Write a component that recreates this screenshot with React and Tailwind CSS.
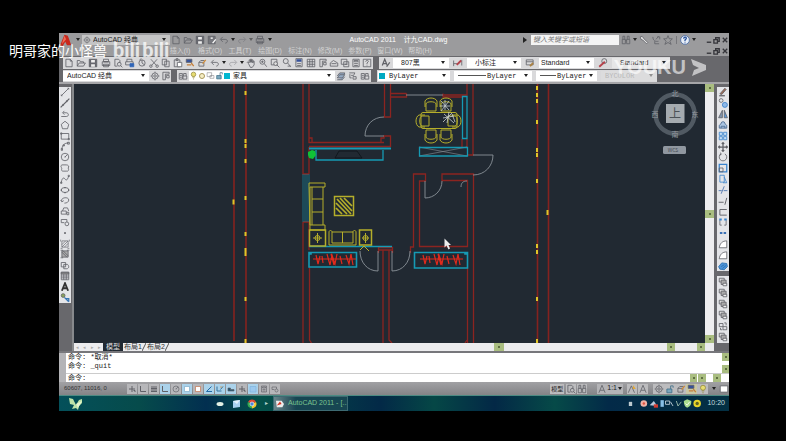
import React, { useState } from 'react';

const glyphs = {
    file: <path d="M3 2h7l3 3v9H3zM10 2v3h3" />,
    open: <path d="M2 13V4h4l1 2h5v2M2 13l3-5h10l-3 5z" />,
    save: <g><path d="M2 2h12v12H2z" fill="#66676e" /><path d="M5 3h6v4H5zM5 10h6v4H5z" fill="#eee" stroke="none" /></g>,
    saveAs: <g><path d="M2 2h11v12H2z" fill="#77787e" /><path d="M5 3h5v4H5z" fill="#eee" /><path d="M9 13l5-6" stroke="#fff" strokeWidth="2" /></g>,
    print: <g><path d="M4 6V2h8v4M2 6h12v6H2zM4 10h8v4H4z" /><path d="M4 6h8" strokeWidth="2" /></g>,
    preview: <g><path d="M3 2h6l2 2v4M3 2v11h4" /><circle cx="10" cy="10" r="3" /><path d="M12 12l3 3" /></g>,
    publish: <g><path d="M3 6V2h8v4M1 6h12v5H1z" /><path d="M8 9h6v5H8z" fill="#2f65b8" stroke="#2f65b8" /></g>,
    globe: <g><circle cx="8" cy="8" r="5" /><path d="M8 3v5l4 3M4 3l3-2" /></g>,
    cut: <g><path d="M3 2l9 10M13 2L4 12" /><circle cx="3" cy="13" r="2" /><circle cx="13" cy="13" r="2" /></g>,
    copy: <path d="M2 2h7v9H2zM6 5h7v9H6z" />,
    paste: <g><path d="M2 3h9v11H2zM5 1h3v3H5z" /><path d="M7 7h7v7H7z" fill="#fff" /></g>,
    match: <g><path d="M2 2h9v5H2z" fill="#35519b" /><path d="M3 11h7M10 8l4 5" stroke="#c5803b" strokeWidth="2" /></g>,
    block: <g><path d="M3 7h8v6H3zM3 7l3-3h6" /><path d="M9 9l5-6" stroke="#d18b37" strokeWidth="2" /></g>,
    undo: <path d="M3 7h7c5 0 4 6 0 6M6 3L2 7l4 4" />,
    redo: <path d="M13 7H6c-5 0-4 6 0 6M10 3l4 4-4 4" opacity=".45" />,
    hand: <path d="M4 9L2 7l1-1 2 2V3h2v4V2h2v5V3h2v5V5h2v6l-3 4H7z" />,
    zoom: <g><circle cx="7" cy="6" r="4" /><path d="M10 9l4 5M7 4v4M5 6h4" /></g>,
    zoomWin: <g><path d="M2 2h9v9H2z" /><circle cx="9" cy="9" r="3" fill="#ddd" /><path d="M11 11l4 4" /></g>,
    zoomPrev: <g><circle cx="6" cy="5" r="4" /><path d="M9 8l5 6M9 13h5" /></g>,
    props: <g><path d="M3 1h10v13H3z" /><path d="M4 2h8v4H4z" fill="#35519b" stroke="none" /><path d="M5 9h6M5 12h6" /></g>,
    grid: <path d="M2 2h12v12H2zM2 6h12M2 10h12M6 2v12M10 2v12" />,
    palette: <path d="M3 2h10v3H7v9H3zM9 7h4v4H9z" />,
    sheet: <path d="M2 8l5-4 7 4v5H2zM4 9h8" />,
    markup: <path d="M2 2h9v8H2zM6 6h8v8H6zM8 10h4" />,
    calc: <path d="M3 2h10v12H3zM5 4h6v2H5zM5 9h6M5 12h6" />,
    help: <g><path d="M2 2h12v12H2z" /><path d="M6 6c0-3 5-3 4 0L8 8v2M8 12v1" /></g>,
    textStyle: <g><path d="M2 12L6 2l4 10M3 9h6" strokeWidth="2" /><path d="M9 14l5-7" strokeWidth="2" /></g>,
    dimStyle: <g><path d="M1 4v9M1 9h9M14 3v9" /><path d="M6 11l7-7" stroke="#b5424b" strokeWidth="3" /></g>,
    tableStyle: <g><path d="M2 3h11v8H2zM2 6h11" /><path d="M8 13l5-5" stroke="#aa8142" strokeWidth="3" /></g>,
    leader: <g><circle cx="10" cy="5" r="4" /><path d="M2 14l9-8" stroke="#b5424b" strokeWidth="3" /></g>,
    gear: <g><circle cx="8" cy="8" r="5" /><circle cx="8" cy="8" r="2" /><path d="M8 1v2M8 13v2M1 8h2M13 8h2" /></g>,
    layers: <path d="M2 11l4-5h8l-4 5zM2 8l4-5h8l-1 3M2 14h8l4-5" fill="#96abc6" />,
    layerPrev: <path d="M2 3h9l-2 4H5M8 9h5v4H8zM3 5v6h3" />,
    layerBox: <path d="M2 4h5v9H2zM8 8h6v5H8zM9 8V4h4v4M3 7h3M3 10h3" />,
    bulb: <g stroke="#94893e"><circle cx="8" cy="6" r="4" fill="#e6dc72" /><path d="M6 11h4M7 14h2" /></g>,
    sun: <circle cx="8" cy="8" r="5" stroke="#a8975a" fill="#f5eec6" strokeWidth="2" />,
    freeze: <path d="M2 3h8v7H2zM7 8h7v5H7z" opacity=".6" />,
    lock: <g stroke="#3f6d88"><path d="M3 8h8v6H3z" fill="#7aa6bc" /><path d="M9 8V3h4v3" /></g>,
    binoc: <path d="M2 7h5v7H2zM9 7h5v7H9zM3 7V2h3v5M10 7V2h3v5M7 9h2" />,
    key: <path d="M2 3l3-1 3 4 6 6-2 2-6-6-3-1z" fill="#e0e0e0" />,
    dish: <path d="M3 3c0 6 4 8 9 7M12 2l-4 5M6 10v4h7M10 3h4v4" />,
    star: <path d="M8 1l2 5h5l-4 4 2 5-5-3-5 3 2-5-4-4h5z" />,
    about: <g><circle cx="8" cy="8" r="7" fill="#e8eef6" stroke="#4b6ea9" /><path d="M6 6c0-4 5-3 4 0L8 8v2M8 12v1" stroke="#234f9b" strokeWidth="2" /></g>,
    line: <path d="M2 14L14 2M2 12v2h2M12 2h2v2" />,
    xline: <path d="M1 15L15 1M4 10l2 2M10 4l2 2" strokeWidth="2" />,
    pline: <path d="M2 12h8c5 0 4-6 0-6H5M7 3L4 6l3 3" />,
    polygon: <path d="M8 2l6 5-2 7H4L2 7z" />,
    rect: <path d="M2 4h12v9H2zM1 3h2v2H1zM13 12h2v2h-2z" />,
    arc: <path d="M3 14C3 7 7 3 14 3M2 12h2v3H2zM12 2h3v3h-3zM5 6h2v2H5z" />,
    circle: <g><circle cx="8" cy="8" r="6" /><path d="M8 8l4-4M7 8h2" /></g>,
    cloud: <path d="M3 3h7c4 0 5 3 3 5 2 3 0 6-3 5H5c-4 0-2-4-2-5-2-1-2-4 0-5z" />,
    spline: <path d="M2 14c1-8 4-9 6-6s4 2 6-5M1 13h2v2H1zM13 2h2v2h-2z" />,
    ellipse: <g><ellipse cx="8" cy="8" rx="6" ry="4" /><path d="M1 8h2M13 8h2M8 3v2M8 11v2" strokeWidth="2" /></g>,
    ellArc: <path d="M3 10C0 4 14 2 14 8c0 3-3 5-7 5M1 8l2 3 3-2" />,
    insert: <path d="M2 8h8v5H2zM4 8l2-5h6l2 5M11 10h3v4h-3z" />,
    makeBlock: <g><path d="M2 9V4h9v4M2 9h5" /><circle cx="11" cy="11" r="3" /></g>,
    point: <circle cx="8" cy="8" r="1" fill="#555" />,
    hatch: <path d="M3 3h10v10H3zM3 9l6-6M3 13L13 3M7 13l6-6M1 1v3M15 1v3M1 15h3M12 15h3" opacity=".8" />,
    gradient: <g><path d="M3 3h10v10H3z" fill="#aaa" /><path d="M3 5l8 8M5 3l8 8M1 2h4M11 2h4M1 14h4" /></g>,
    region: <path d="M2 4h7v7H2zM6 7h6c4 4 1 7-1 7H6z" />,
    table: <g><path d="M2 2h12v12H2zM2 8h12M2 11h12M6 5v9M10 5v9" /><path d="M2 2h12v3H2z" fill="#888" /></g>,
    letterA: <path d="M3 14L8 2l5 12M5 10h6" strokeWidth="3" stroke="#333" />,
    addSel: <g><circle cx="5" cy="4" r="3" fill="#8aa45c" /><path d="M9 9h5v5M7 7l7 7" stroke="#3575b5" strokeWidth="2" /></g>,
    erase: <g><path d="M3 11l8-9 2 2-7 8z" fill="#9c6a54" /><path d="M2 14h9" strokeWidth="2" /></g>,
    copyObj: <g><circle cx="5" cy="4" r="3" /><circle cx="11" cy="11" r="4" fill="#8fb9e8" stroke="#397fc9" /></g>,
    mirror: <g><path d="M7 2v12H1z" fill="#8296ae" /><path d="M10 2v12h5z" fill="#5b9ce0" /></g>,
    offset: <path d="M2 13V9c1-3 3-1 3-4s6-3 6 0 3 2 3 4v4zM5 13v-3h6v3" fill="#aac5e2" stroke="#45658c" />,
    array: <path d="M2 2h5v5H2zM9 2h5v5H9zM2 9h5v5H2zM9 9h5v5H9z" stroke="#3a84cd" fill="#c5def5" />,
    move: <path d="M8 1v14M1 8h14M6 3l2-2 2 2M6 13l2 2 2-2M3 6L1 8l2 2M13 6l2 2-2 2" strokeWidth="2" />,
    rotate: <path d="M5 3a6 6 0 1 0 6 0M4 1l1 3-3 1" />,
    scale: <g><path d="M2 2h12v12H2z" stroke="#3a84cd" strokeWidth="2" /><path d="M2 8h6v6H2z" /></g>,
    stretch: <path d="M3 2h7v11H3zM10 5l4 9H8" stroke="#3a84cd" />,
    trim: <path d="M1 9h5M9 9h6M5 14l5-12" stroke="#416baa" />,
    extend: <path d="M1 10h8M14 3l-3 11" strokeWidth="1.5" />,
    brk: <path d="M14 4H3v9h11" strokeWidth="1.5" />,
    brk2: <g><path d="M3 5v8h3M13 5v8h-3" /><path d="M2 4h4M10 4h4" stroke="#3a84cd" strokeWidth="3" /></g>,
    join: <path d="M3 8h4M9 8h4" stroke="#3a70b5" strokeWidth="3" />,
    chamfer: <path d="M2 14h12V3C7 3 3 7 2 14z" fill="#fff" />,
    explode: <path d="M1 9l5-6 8 1 1 5-5 5-7-1zM5 9l5-3M7 12l6-5" fill="#4d93d8" stroke="#286eae" />,
    order: <g><path d="M2 2h8v6H2z" fill="#ddd" /><path d="M5 5h8v7H5z" fill="#aaa" /><path d="M8 10h6v4H8z" fill="#eee" /></g>,
    order2: <path d="M2 4h6v5H2zM8 9h6v5H8zM10 3h3v4M4 11v3h3" />,
    snap: <path d="M8 2v12M2 8h12M11 11h3v3" strokeWidth="2" />,
    ortho: <path d="M3 2v11h11" strokeWidth="2" />,
    dyn: <g><path d="M2 3v9h9M9 9l5-6" strokeWidth="2" stroke="#34739e" /><path d="M8 4h5" stroke="#d18c34" /></g>,
    polar: <path d="M13 3L3 13h11" stroke="#236aa5" strokeWidth="2" />,
    lwt: <path d="M2 6h5v3h7v3H2z" fill="#245772" />,
    shade: <path d="M2 4h12M2 7h12M2 10h12M2 13h12" strokeWidth="2" />,
    plain: <path d="M3 3h10v10H3z" fill="#fff" stroke="#79a9c8" />,
    orange: <path d="M3 3h10v10H3z" fill="#fff" stroke="#c36d46" />,
    blank: <path d="M2 3h12v11H2z" fill="#9cc9ee" stroke="#7cb3df" />,
    annot: <path d="M3 14L8 2l5 12M5 10h6" />,
    annotGold: <g><path d="M2 14L7 3l5 11" /><path d="M10 2l4 6H9z" fill="#e1a83a" stroke="none" /></g>,
    win: <path d="M2 3h12v10H2z" fill="#fff" />,
};

function Glyph({ name, className = 'size-[10px]' }) {
    return (
        <svg viewBox="0 0 16 16" className={`shrink-0 ${className}`} fill="none" stroke="#606167" strokeWidth="1.3">
            {glyphs[name]}
        </svg>
    );
}

function Tool({ name, className = 'w-3' }) {
    return (
        <button aria-label={name} className={`flex min-h-0 shrink-0 items-center justify-center ${className}`}>
            <Glyph name={name} />
        </button>
    );
}

function Caret({ className = 'w-[6px]' }) {
    return (
        <svg viewBox="0 0 6 4" className={`h-1 shrink-0 ${className}`}>
            <path d="M1 0h4L3 3z" fill="#222" />
        </svg>
    );
}

function Combo({ label, options, className, bg = 'bg-white', selectClass = 'pl-2', children, disabled }) {
    return (
        <div className={`flex h-[10px] shrink-0 items-center ${bg} ${className}`}>
            {children}
            <select aria-label={label} disabled={disabled}
                className={`h-full min-w-0 flex-1 appearance-none bg-transparent text-[7px] leading-[10px] text-[#222] outline-none ${selectClass}`}>
                {options.map(o => <option key={o}>{o}</option>)}
            </select>
            <Caret className={disabled ? 'mr-[3px] w-[6px] opacity-40' : 'mr-[3px] w-[6px]'} />
        </div>
    );
}

const Rule = ({ className }) => <span className={`ml-1 h-px shrink-0 bg-[#555] ${className}`} />;

const Divider = () => <span className="h-full w-[6px] shrink-0 bg-[#68686c]" />;

function WindowButtons() {
    return (
        <div className="flex text-[#35353a]">
            {['M2 7h5', 'M1 4h4v4H1zM3 4V2h4v4H5', 'M2 2l5 5M7 2L2 7'].map((d, i) => (
                <button key={d} aria-label={['Minimize', 'Restore', 'Close'][i]} className="w-2">
                    <svg viewBox="0 0 9 9" className="size-2" fill="none" stroke="currentColor" strokeWidth="1.5"><path d={d} /></svg>
                </button>
            ))}
        </div>
    );
}

function TitleBar() {
    return (
        <div className="flex h-[13px] items-center pt-px">
            <button aria-label="Application menu" className="flex w-[23px] items-center">
                <svg viewBox="0 0 18 14" className="h-3 w-4">
                    <path d="M1 13L6 1l4 1 4 11H9l-2-4-3 5z" fill="#c8281c" />
                    <path d="M6 2l2 4-5 6z" fill="#f06b55" />
                </svg>
                <Caret />
            </button>
            <Combo label="Workspace" options={['AutoCAD 经典']} className="w-[88px]" bg="bg-[#c4c4c4]" selectClass="pl-[2px]">
                <Glyph name="gear" className="ml-px size-2" />
            </Combo>
            <Tool name="file" /><Tool name="open" /><Tool name="save" /><Tool name="saveAs" /><Tool name="undo" />
            <Caret />
            <Tool name="redo" />
            <Caret className="w-[6px] opacity-50" />
            <Tool name="print" />
            <Caret className="w-2" />
            <h1 className="flex flex-1 justify-center gap-2 text-[7px] leading-[12px] whitespace-pre text-white">
                <span>AutoCAD 2011</span><span>计九CAD.dwg</span>
            </h1>
            <svg viewBox="0 0 4 6" className="mr-1 h-[6px] w-1"><path d="M0 0l4 3-4 3z" fill="#222" /></svg>
            <input aria-label="Search" placeholder="键入关键字或短语"
                className="h-[10px] w-[88px] bg-[#f4f4f4] pl-[2px] text-[7px] text-[#555] italic outline-none placeholder:text-[#777]" />
            <Tool name="binoc" className="ml-px w-3" />
            <Caret />
            <Tool name="key" /><Tool name="dish" /><Tool name="star" />
            <span className="mx-[2px] h-2 w-px bg-[#77777b]" />
            <Tool name="about" />
            <Caret className="mr-2 w-[6px]" />
            <WindowButtons />
        </div>
    );
}

const menus = ['插入(I)', '格式(O)', '工具(T)', '绘图(D)', '标注(N)', '修改(M)', '参数(P)', '窗口(W)', '帮助(H)'];

function MenuBar() {
    return (
        <nav className="flex h-[10px] items-center pl-[106px]">
            {menus.map(m => (
                <button key={m} className="w-[30px] text-center text-[7px] leading-[10px] whitespace-nowrap text-[#d2d2d2]">{m}</button>
            ))}
            <span className="flex-1" />
            <WindowButtons />
        </nav>
    );
}

function Toolbars() {
    return (
        <div className="bg-[#68686c]">
            <div className="flex h-[13px] items-center">
                <div className="ml-1 flex h-3 items-center bg-[#d9d9db]">
                    {['file', 'open', 'save'].map(n => <Tool key={n} name={n} />)}
                    <span className="w-px" />
                    {['print', 'preview', 'publish', 'globe'].map(n => <Tool key={n} name={n} />)}
                    {['cut', 'copy', 'paste', 'match', 'block'].map(n => <Tool key={n} name={n} />)}
                    <span className="w-px" />
                    <Tool name="undo" /><Caret /><Tool name="redo" /><Caret />
                    {['hand', 'zoom', 'zoomWin', 'zoomPrev', 'props', 'grid'].map(n => <Tool key={n} name={n} />)}
                    {['palette', 'sheet', 'markup', 'calc'].map(n => <Tool key={n} name={n} className="w-[11px]" />)}
                    <Tool name="help" />
                </div>
                <Divider />
                <div className="flex h-3 items-center bg-[#d9d9db]">
                    <Tool name="textStyle" className="w-[14px]" />
                    <Combo label="Text style" options={['807黑']} className="w-[56px]" />
                    <Tool name="dimStyle" className="w-[18px]" />
                    <Combo label="Dimension style" options={['小标注']} className="w-[54px]" />
                    <Tool name="tableStyle" className="w-[18px]" />
                    <Combo label="Table style" options={['Standard']} className="w-[55px]" selectClass="pl-[2px]" />
                    <Tool name="leader" className="w-[18px]" />
                    <Combo label="Multileader style" options={['Standard']} className="w-[58px]" bg="bg-[#e6e6e7]" />
                </div>
            </div>
            <div className="flex h-[13px] items-center">
                <div className="ml-1 flex h-3 items-center bg-[#d9d9db]">
                    <Combo label="Workspaces" options={['AutoCAD 经典']} className="w-[86px]" selectClass="pl-1" />
                    <Tool name="gear" className="w-[11px]" /><Tool name="palette" className="w-[11px]" />
                </div>
                <Divider />
                <div className="flex h-3 items-center bg-[#d9d9db]">
                    <Tool name="layerBox" />
                    <Combo label="Layer" options={['家具']} className="w-[146px]" selectClass="pl-[3px]">
                        <Glyph name="bulb" className="size-[9px]" /><Glyph name="sun" className="size-[8px]" />
                        <Glyph name="freeze" className="size-[9px]" /><Glyph name="lock" className="size-[9px]" />
                        <span className="size-[6px] bg-[#00b6d0]" />
                    </Combo>
                    <Tool name="layers" /><Tool name="layerPrev" /><Tool name="layerBox" />
                </div>
                <Divider />
                <div className="flex h-3 items-center gap-1 bg-[#d9d9db] pl-px">
                    <Combo label="Color" options={['ByLayer']} className="w-[72px]" selectClass="pl-1 font-['Liberation_Mono',monospace]">
                        <span className="ml-px size-[6px] bg-[#00a9c2]" />
                    </Combo>
                    <Combo label="Linetype" options={['ByLayer']} className="w-[78px]" selectClass="pl-px font-['Liberation_Mono',monospace]">
                        <Rule className="w-7" />
                    </Combo>
                    <Combo label="Lineweight" options={['ByLayer']} className="w-[61px]" selectClass="pl-px font-['Liberation_Mono',monospace]">
                        <Rule className="w-4" />
                    </Combo>
                    <Combo label="Plot style" options={['BYCOLOR']} className="w-[56px]" bg="bg-[#dcdcdd]" selectClass="pl-1 font-['Liberation_Mono',monospace] opacity-20" disabled />
                </div>
            </div>
            <div className="h-[2px] bg-[#a5a5a8]" />
        </div>
    );
}

const leftTicks = [93, 141, 146, 161, 198, 234, 250, 254, 299, 341];
const rightTicks = [88, 95, 101, 122, 150, 155, 181, 246, 252, 299, 341];

const Hangers = ({ x }) => (
    <g stroke="#e02a1c" strokeWidth="1.2" fill="none">
        <path d={`M${x} 259h43`} />
        <path d={`M${x + 3} 255l2 9 2-8M${x + 9} 256l1 7M${x + 14} 254l3 11 2-10 3 9 2-10M${x + 18} 254l3 11M${x + 27} 256l2 8M${x + 33} 255l3 9 2-10 2 11`} />
    </g>
);

const Chair = ({ t }) => <path transform={t} d="M1 13V6C1 3 11 3 11 6v7zM0 9V3C2-1 10-1 12 3v6" />;

function Drawing() {
    return (
        <svg viewBox="74 84 631 259" className="block h-auto w-full bg-[#212932]" fill="none">
            {/* outer boundary lines */}
            <g stroke="#85221f" strokeWidth="1.6">
                <path d="M234 84v257M246 84v259M537.5 84v259M548.5 84v259" />
            </g>
            <g fill="#e0c528">
                {leftTicks.map(y => <rect key={y} x="244.5" y={y - 2} width="2" height="4" />)}
                {rightTicks.map(y => <rect key={y} x="536" y={y - 2} width="2" height="4" />)}
                <rect x="232.5" y="199.5" width="2" height="5" />
                <rect x="546.5" y="210" width="2" height="5" />
            </g>

            {/* walls */}
            <g stroke="#8c2420" strokeWidth="1.3">
                <path d="M303 84v90h6M309 84v58.5h75M309 138h3v4M381 142v-4h3v-2h6.5v11M309 146.5h81M309 147v27" />
                <path d="M384.5 84v33h6V84M390.5 93.500h16M390.5 97h16v-3.5M443 93.5v3.5h19M443 95h24V84M473 84v71h-6" />
                <path d="M462 139v8M467 139v8" />
                <path d="M410.5 253v-6h3v-73h12v7h-6v65.5h48V180.5h-25.5v-6.5h31.5v169M467.5 268v75" />
                <path d="M303 222h6M303 222v121M309 222v28M309.5 267v73l2 3M378.5 253v-5.5h14v5.5M378 250h14M383 250v93M389 250v90l3 3M467 340l-2 3" />
            </g>

            {/* doors */}
            <g stroke="#8a9299" strokeWidth=".9">
                <path d="M384 117c-11 0-19 8-19 19h19M406 95h37M473 155h20c0 11-8 20-20 20M425 181v17c9 0 17-7 17-17" />
                <path d="M378 251v20c-11 0-18-9-18-20M392 251v20c11 0 18-9 18-20M461 187c0-4 2-6 6-6" />
                <path d="M419 147l48 9M467 147l-48 9" strokeWidth=".6" />
            </g>

            {/* windows and cabinets */}
            <g stroke="#169ab4" strokeWidth="1.3">
                <path d="M309 148.5h82" strokeWidth="2" />
                <path d="M309 246.5h83" strokeWidth="1.5" />
                <path d="M316 150v10h67v-10M419.5 147.5h48v8.5h-48zM462.5 96.5h4.5v42h-4.5z" />
                <path d="M309 252.5h47.5V267H309zM414.5 252.5h53V268h-53zM311 252v2h-2M465 252v2h2" strokeWidth="1.6" />
                <path d="M303 174v48M305 174v48M307 174v48M309 174v48" strokeWidth=".6" />
            </g>
            <path d="M335 158l4-7h18l5 7z" stroke="#11171d" />
            <path d="M308 152l4-2 3 1 1 4-3 4-4-1-1-3z" fill="#10c136" />
            <Hangers x={313} />
            <Hangers x={420} />

            {/* sofas, tables */}
            <g stroke="#b5ae2b" strokeWidth="1">
                <path d="M309 186v-3h16v4h-15v38h15v5h-15zM312 187v38M323 187v38M312 199h11M312 212h11" />
                <path d="M329 245v-13c0-2 3-2 3 0v11h21v-11c0-2 3-2 3 0v13zM332 232h21M342.5 232v11" />
                <path d="M309.5 230h16v16h-16zM359.5 230h12v15h-12z" strokeWidth="1.5" />
                <circle cx="317.5" cy="238" r="2.5" /><circle cx="365.5" cy="238" r="2.5" />
                <path d="M313 238h9M317.5 233v10M362 238h7M365.5 233v10M360 250l4-4 5 5" />
                <path d="M334.5 196.5h19v19h-19z" strokeWidth="1.5" />
                <path d="M337 199l14 15M340 198l12 13M344 198l8 8M336 203l11 11M336 208l6 6" strokeWidth="1.7" />
                <rect x="421" y="112.5" width="36" height="16" rx="2" />
                <Chair t="translate(425 98)" />
                <Chair t="translate(440 98)" />
                <Chair t="rotate(180 218.5 71.5)" />
                <Chair t="rotate(180 226 71.5)" />
                <Chair t="translate(416 127) rotate(-90)" />
                <Chair t="translate(461 115) rotate(90)" />
            </g>
            <g stroke="#c9cfd2" strokeWidth=".8">
                <path d="M441 101l8 9M449 101l-8 10M440 106h10M445 100v10M444 114l10 9M443 118l11-2M449 112l-2 11M443 122l9-9M452 114l3 8" />
            </g>

            {/* view cube */}
            <circle cx="675" cy="114" r="19.5" stroke="#515a63" strokeWidth="4.5" />
            <rect x="666" y="104" width="18.5" height="19" fill="#a5abb0" />
            <g fill="#959ba1" fontSize="7" textAnchor="middle" fontFamily="Noto Sans CJK SC, sans-serif">
                <text x="675" y="118" fontSize="12" fill="#4b5157">上</text>
                <text x="675" y="96">北</text>
                <text x="675" y="137">南</text>
                <text x="655" y="117">西</text>
                <text x="695" y="117">东</text>
                <rect x="663" y="146" width="23" height="8" rx="1.5" fill="#9097a0" />
                <text x="673" y="152" fontSize="5" fill="#454c55">WCS</text>
            </g>
            <path d="M444.5 238.5v9l2-2 2 4 1.5-1-1.5-3.5h2.5z" fill="#eee" />
        </svg>
    );
}

const ScrollBlock = ({ className }) => (
    <button aria-label="Scroll" className={`flex shrink-0 items-center justify-center bg-[#a9bd80] ${className}`}>
        <span className="size-[2px] bg-[#5f7042]" />
    </button>
);

const drawTools = ['line', 'xline', 'pline', 'polygon', 'rect', 'arc', 'circle', 'cloud', 'spline', 'ellipse', 'ellArc',
    'insert', 'makeBlock', 'point', 'hatch', 'gradient', 'region', 'table', 'letterA', 'addSel'];
const modifyTools = ['erase', 'copyObj', 'mirror', 'offset', 'array', 'move', 'rotate', 'scale', 'stretch', 'trim', 'extend',
    'brk', 'brk2', 'join', 'chamfer', 'chamfer', 'explode'];
const orderTools = ['order', 'order', 'order', 'order', 'order2', 'order'];

function ToolColumn({ tools, className }) {
    return (
        <div className={`flex w-3 flex-col bg-[#e4e5e8] ${className}`}>
            {tools.map((n, i) => <Tool key={i} name={n} className="w-3 flex-1" />)}
        </div>
    );
}

function Workspace() {
    const [tab, setTab] = useState('模型');
    return (
        <div className="flex bg-[#68686c]">
            <div className="w-[15px] shrink-0 border-r-2 border-[#87898c] pt-[3px]">
                <ToolColumn tools={drawTools} className="h-[216px]" />
            </div>
            <div className="min-w-0 flex-1">
                <div className="flex">
                    <div className="min-w-0 flex-1"><Drawing /></div>
                    <div className="flex w-[9px] shrink-0 flex-col bg-[#eeeef0]">
                        <ScrollBlock className="h-2" />
                        <span className="flex-1" />
                        <ScrollBlock className="h-2" />
                        <span className="flex-1" />
                        <ScrollBlock className="h-2" />
                    </div>
                </div>
                <div className="flex h-2 items-center bg-[#ececee]">
                    <span className="flex w-[29px] justify-around text-[5px] leading-[8px] text-[#aaa]">
                        <span>◂</span><span>◂</span><span>▸</span><span>▸</span>
                    </span>
                    {['模型', '布局1', '布局2'].map(t => (
                        <button key={t} onClick={() => setTab(t)}
                            className={t === tab
                                ? 'relative h-full w-[20px] bg-[#212932] text-center text-[7px] leading-[8px] text-[#ddd]'
                                : 'flex h-full w-[23px] items-center justify-end text-[7px] leading-[8px] whitespace-nowrap text-[#333]'}>
                            {t}
                            {t !== tab && (
                                <svg viewBox="0 0 4 8" className="h-2 w-1" stroke="#555"><path d="M0 8l4-8" /></svg>
                            )}
                        </button>
                    ))}
                    <span className="flex-[26]" />
                    <ScrollBlock className="h-full w-[10px]" />
                    <span className="flex-[13]" />
                    <ScrollBlock className="mr-[22px] h-full w-2" />
                    <ScrollBlock className="mr-[9px] h-full w-2" />
                </div>
            </div>
            <div className="ml-[3px] flex w-3 shrink-0 flex-col pt-[3px]">
                <ToolColumn tools={modifyTools} className="h-[184px]" />
                <ToolColumn tools={orderTools} className="mt-[5px] h-[67px]" />
            </div>
        </div>
    );
}

function CommandPanel() {
    return (
        <div className="flex border-t-2 border-[#77777b] bg-[#b4b4b7]">
            <div className="w-[7px] shrink-0" />
            <div className="min-w-0 flex-1 bg-white font-['Liberation_Mono','Noto_Sans_CJK_SC',monospace] text-[7px] text-[#222]">
                <div className="flex">
                    <div className="flex-1 pl-[2px]">
                        <p className="h-[9px] leading-[9px]">命令: *取消*</p>
                        <p className="h-[11px] leading-[9px]">命令: _quit</p>
                    </div>
                    <div className="flex w-[7px] flex-col justify-between">
                        <ScrollBlock className="h-2" />
                        <ScrollBlock className="h-2" />
                    </div>
                </div>
                <div className="flex h-[9px] items-center border-t border-[#ccc]">
                    <label htmlFor="cmd" className="pl-[2px]">命令:</label>
                    <input id="cmd" className="h-2 min-w-0 flex-1 pl-1 outline-none" />
                    <ScrollBlock className="h-full w-[7px]" />
                    <ScrollBlock className="ml-px h-full w-2" />
                    <span className="w-[7px]" />
                    <ScrollBlock className="mr-2 h-full w-2" />
                </div>
            </div>
        </div>
    );
}

const modes = [
    ['snap'], ['ortho'], ['shade'], ['ortho', 1], ['circle'], ['plain', 1], ['orange'],
    ['polar', 1], ['dyn', 1], ['lwt', 1], ['snap'], ['blank', 1], ['calc'], ['makeBlock'],
];

function StatusBar() {
    return (
        <div className="flex h-[13px] items-center bg-linear-to-b from-[#a1a1a4] to-[#848487] pr-px">
            <span className="w-[68px] shrink-0 pl-[5px] text-[6px] text-[#333]">60607, 11016, 0</span>
            {modes.map(([n, on], i) => (
                <button key={i} aria-label={n}
                    className={on ? 'mr-px flex h-[10px] w-[10px] items-center justify-center bg-[#abd2ea]'
                        : 'mr-px flex h-[10px] w-[10px] items-center justify-center bg-[#b7b7ba]'}>
                    <Glyph name={n} className="size-2" />
                </button>
            ))}
            <span className="flex-1" />
            <button className="mr-[2px] h-[10px] w-[14px] bg-[#bcbcbe] text-center text-[6px] leading-[10px] whitespace-nowrap text-[#222]">模型</button>
            <Tool name="preview" className="mr-px h-[10px] w-[10px] bg-[#bcbcbe]" />
            <Tool name="binoc" className="h-[10px] w-[10px] bg-[#bcbcbe]" />
            <button className="ml-[10px] flex h-[10px] items-center bg-[#b4b4b7] text-[7px] text-[#222]">
                <Glyph name="annot" /><span>1:1</span><Caret />
            </button>
            <Tool name="annotGold" className="ml-1 h-[10px] w-[10px] bg-[#bcbcbe]" />
            <Tool name="annot" className="ml-px h-[10px] w-[10px] bg-[#bcbcbe]" />
            <span className="w-[5px]" />
            <Tool name="gear" className="h-[10px] w-[11px] bg-[#bcbcbe]" />
            <Tool name="lock" className="h-[10px] w-[11px] bg-[#bcbcbe]" />
            <Tool name="block" className="h-[10px] w-[11px] bg-[#bcbcbe]" />
            <Tool name="match" className="h-[10px] w-[11px] bg-[#c9c8a5]" />
            <Tool name="bulb" className="h-[10px] w-[11px] bg-[#bcbcbe]" />
            <Caret className="mx-[3px] w-[6px]" />
            <Tool name="win" className="w-2" />
        </div>
    );
}

function Taskbar() {
    return (
        <div className="flex h-4 items-center border-t border-[#4c8b83] bg-[linear-gradient(90deg,#04505a,#064b4b_12%,#022f50_22%,#04514a_30%,#032947_48%,#054746_56%,#032846_65%,#064a48_74%,#032a48_82%,#033043)]">
            <button aria-label="Start" className="ml-[9px] w-[18px]">
                <svg viewBox="0 0 16 14" className="h-[14px] w-4">
                    <path d="M8 8L5 2 1 1l1 6 4 1-2 4 4-1 2 2 1-4 3-3V2l-3 1z" fill="#bfe4a8" />
                    <path d="M8 7l2 4 4-7z" fill="#e8f5cf" />
                </svg>
            </button>
            <span className="w-[126px]" />
            <button aria-label="Cloud" className="flex w-4 justify-center">
                <svg viewBox="0 0 10 10" className="size-[10px]"><ellipse cx="5" cy="5" rx="3.5" ry="2" fill="#e3f1e5" /></svg>
            </button>
            <button aria-label="Files" className="flex w-4 justify-center">
                <svg viewBox="0 0 10 10" className="size-[10px]"><path d="M2 2l7-1v7l-7 1z" fill="#a9d2f2" /><path d="M2 2l4 3 3-4" fill="#e2f2fd" /></svg>
            </button>
            <button aria-label="Browser" className="flex w-4 justify-center">
                <svg viewBox="0 0 10 10" className="size-[10px]">
                    <path d="M5 5L1 3a4.500 4.500 0 0 1 8 0z" fill="#df4937" />
                    <path d="M5 5L1 3a4.500 4.500 0 0 0 4 6.500z" fill="#36a852" />
                    <path d="M5 5l4-2a4.500 4.500 0 0 1-4 6.500z" fill="#f4c42f" />
                    <circle cx="5" cy="5" r="2" fill="#4a86e0" stroke="#fff" strokeWidth=".6" />
                </svg>
            </button>
            <span className="w-3 text-center text-[6px] text-[#b6d5d0]">▸</span>
            <button className="ml-px flex h-[15px] w-[75px] items-center gap-1 overflow-hidden border border-[#3d6a72] bg-linear-to-r from-[#69868b] to-[#174652] to-30% pl-[2px] text-[7px] whitespace-nowrap text-[#7ac590]">
                <svg viewBox="0 0 10 10" className="size-2 shrink-0"><path d="M0 1h7l3 4-2 4H1z" fill="#eee" /><path d="M1 7l4-5 2 3z" fill="#d43525" /></svg>
                AutoCAD 2011 - [...
            </button>
            <span className="flex-1" />
            <svg viewBox="0 0 90 10" className="mr-1 h-[9px] w-[75px]" preserveAspectRatio="xMinYMid meet">
                <path d="M1 3h4v5H1z" fill="#bcc9cf" />
                <circle cx="19" cy="5" r="4" fill="#f0b2a6" /><circle cx="19" cy="5" r="1.5" fill="#df5443" />
                <path d="M26 7l5-5 4 6z" fill="#b9c8da" /><path d="M31 6h5v4h-5z" fill="#d13b30" />
                <path d="M39 1h4v8h-4z" fill="#88bfe6" /><path d="M45 2h5v4h-5zM51 3l3 5" stroke="#cbd9e2" fill="none" />
                <path d="M58 2l2 6 4-5" stroke="#a7c5b4" fill="none" />
                <path d="M67 2l4-2 5 2c0 5-2 7-5 8-3-1-4-4-4-8z" fill="#a8dd8d" /><path d="M69 5l2 2 3-4" stroke="#fff" fill="none" />
                <circle cx="83" cy="5" r="4.5" fill="#e8d529" /><circle cx="83" cy="5" r="2" fill="#5d6222" />
            </svg>
            <time className="pr-1 text-[7px] text-[#c3dcdf]">10:20</time>
        </div>
    );
}

export default function App() {
    return (
        <div className="relative min-h-screen bg-black pt-[33px] pr-[57px] pl-[59px] font-['Liberation_Sans','Noto_Sans_CJK_SC',sans-serif]">
            <main className="bg-[#9b9b9d]">
                <TitleBar />
                <MenuBar />
                <Toolbars />
                <Workspace />
                <CommandPanel />
                <StatusBar />
                <Taskbar />
            </main>

            {/* video watermarks */}
            <div className="pointer-events-none absolute top-[37px] left-[9px] flex items-center gap-[6px] text-white">
                <span className="font-['Noto_Sans_CJK_SC',sans-serif] text-[14px] leading-[26px]">明哥家的小怪兽</span>
                <span className="flex gap-[2px] font-['Roboto',sans-serif] text-[20px] leading-5 font-bold opacity-75">
                    <span>bili</span><span>bili</span>
                </span>
            </div>
            <div className="pointer-events-none absolute top-[57px] right-[79px] flex items-center gap-1 text-white opacity-60">
                <span className="text-[20px] leading-5 font-bold">YOUKU</span>
                <svg viewBox="0 0 17 17" className="size-[17px]"><path d="M1 0l15 6v5L2 17l2-6 5-2-6-3z" fill="currentColor" /></svg>
            </div>
        </div>
    );
}
